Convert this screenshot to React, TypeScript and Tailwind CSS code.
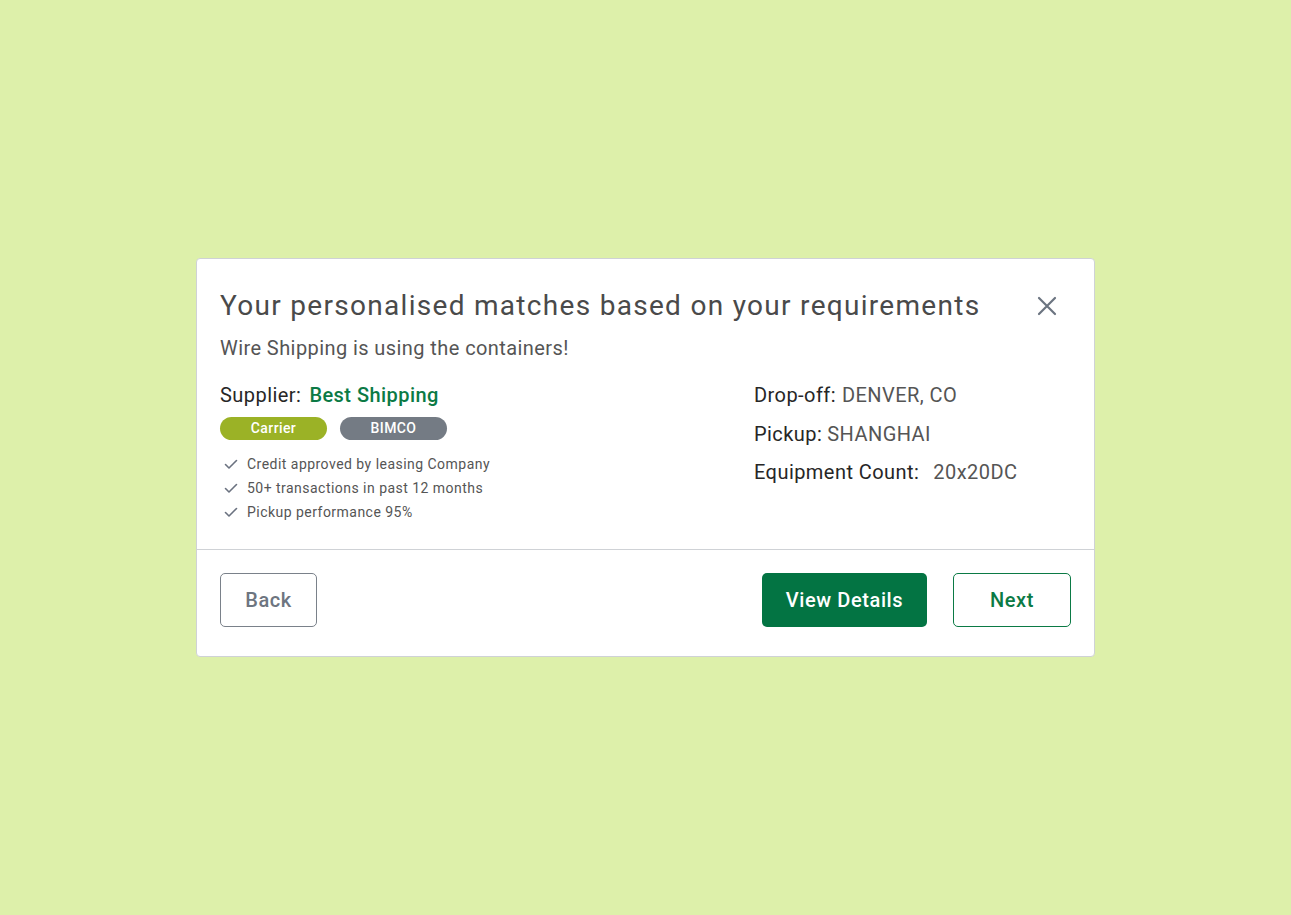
import React from "react";

const Check = () => (
  <svg width="16" height="16" viewBox="0 0 16 16" fill="none" className="shrink-0">
    <path d="M2.5 8.5 L6 12 L13.5 4.5" stroke="#6b7280" strokeWidth="1.6" strokeLinecap="round" strokeLinejoin="round" />
  </svg>
);

export default function App() {
  return (
    <div
      className="w-full h-[915px] bg-[#ddf0aa] flex items-center justify-center"
      style={{ fontFamily: "Roboto, 'Noto Sans', sans-serif" }}
    >
      <div className="w-[899px] h-[399px] bg-white border border-[#cfd2d6] rounded-[4px] flex flex-col">
        <div className="px-[23px] pt-[29px] pb-[25px] border-b border-[#cfd2d6]">
          <div className="flex items-center justify-between">
            <h1 className="text-[28px] leading-[36px] tracking-[1.3px] text-[#4a4a4a] font-normal">
              Your personalised matches based on your requirements
            </h1>
            <button className="mr-[13px] w-[22px] h-[22px] flex items-center justify-center">
              <svg width="20" height="20" viewBox="0 0 20 20" fill="none">
                <path d="M2 2 L18 18 M18 2 L2 18" stroke="#6b7480" strokeWidth="2.2" strokeLinecap="round" />
              </svg>
            </button>
          </div>
          <p className="mt-[10px] text-[20px] leading-[28px] tracking-[0.42px] text-[#555555]">
            Wire Shipping is using the containers!
          </p>
          <div className="flex mt-[19px]">
            <div className="w-[534px]">
              <div className="text-[20px] leading-[28px] tracking-[0.45px] text-[#262626]">
                Supplier:<span className="ml-[8px] text-[#0b7a45] font-medium">Best Shipping</span>
              </div>
              <div className="flex gap-[13px] mt-[8px]">
                <span className="w-[107px] h-[23px] rounded-full bg-[#9bb226] text-white text-[14px] tracking-[0.4px] font-medium flex items-center justify-center">
                  Carrier
                </span>
                <span className="w-[107px] h-[23px] rounded-full bg-[#747b84] text-white text-[14px] tracking-[0.4px] font-medium flex items-center justify-center">
                  BIMCO
                </span>
              </div>
              <ul className="mt-[12px] text-[14px] leading-[24px] tracking-[0.47px] text-[#555555]">
                <li className="flex items-center gap-[8px] pl-[3px]"><Check />Credit approved by leasing Company</li>
                <li className="flex items-center gap-[8px] pl-[3px]"><Check />50+ transactions in past 12 months</li>
                <li className="flex items-center gap-[8px] pl-[3px]"><Check />Pickup performance 95%</li>
              </ul>
            </div>
            <div className="flex flex-col gap-[11px] text-[20px] leading-[28px] tracking-[0.44px]">
              <div className="text-[#262626]">
                Drop-off:<span className="ml-[6px] text-[#555555]">DENVER, CO</span>
              </div>
              <div className="text-[#262626]">
                Pickup:<span className="ml-[5px] text-[#555555]">SHANGHAI</span>
              </div>
              <div className="text-[#262626] -mt-[1px]">
                Equipment Count:<span className="ml-[14px] text-[#555555]">20x20DC</span>
              </div>
            </div>
          </div>
        </div>
        <div className="px-[23px] pt-[23px] flex items-center">
          <button className="w-[97px] h-[54px] rounded-[5px] border-[1.5px] border-[#7a818a] text-[#6d7580] text-[20px] tracking-[0.6px] font-medium">
            Back
          </button>
          <div className="ml-auto flex gap-[26px]">
            <button className="w-[165px] h-[54px] rounded-[5px] bg-[#037443] text-white text-[20px] tracking-[0.6px] font-medium">
              View Details
            </button>
            <button className="w-[118px] h-[54px] rounded-[5px] border-[1.5px] border-[#0b7a45] text-[#0b7a45] text-[20px] tracking-[0.6px] font-medium">
              Next
            </button>
          </div>
        </div>
      </div>
    </div>
  );
}
